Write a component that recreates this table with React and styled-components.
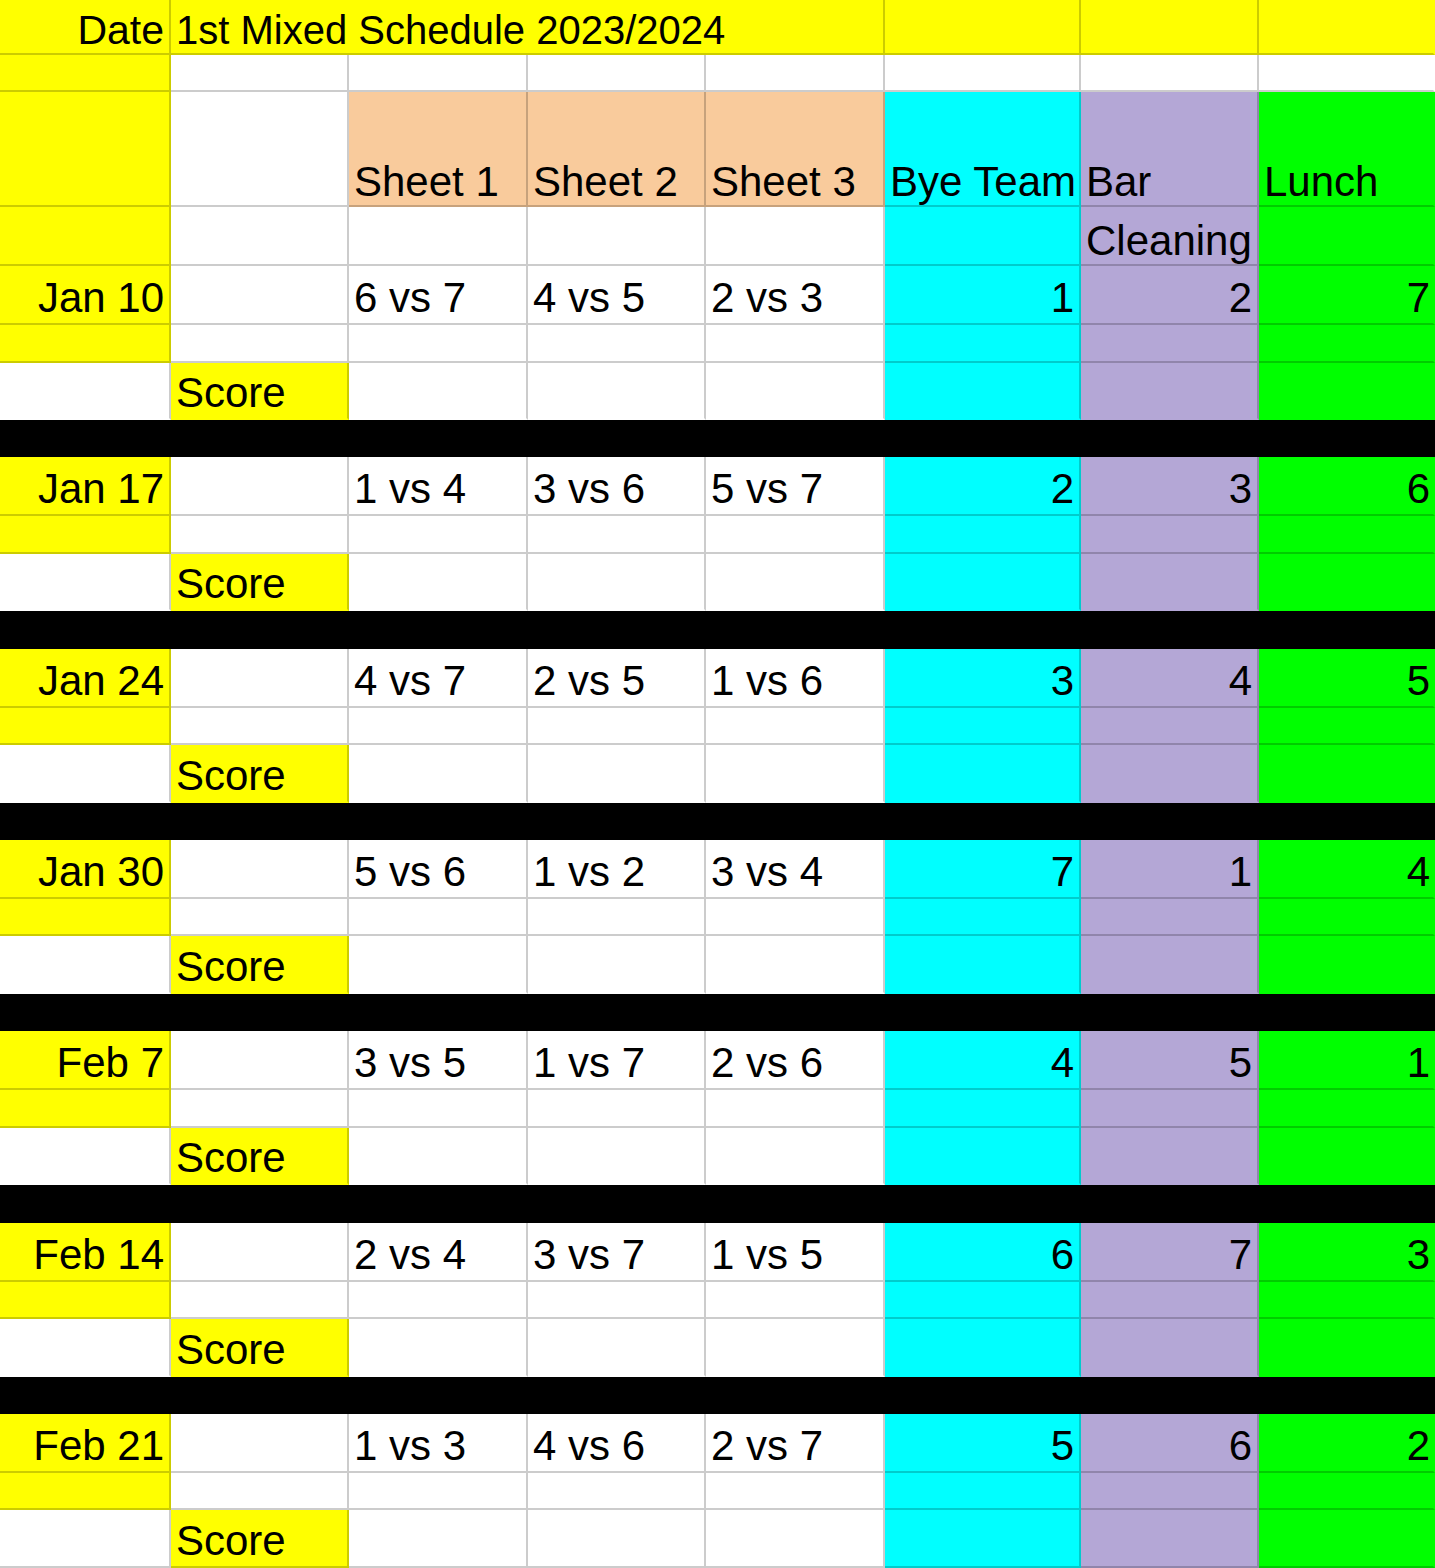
import React from "react";
import styled, { createGlobalStyle } from "styled-components";

const Global = createGlobalStyle`
  html, body { margin: 0; padding: 0; background: #ffffff; }
  body { font-family: "Liberation Sans", Arial, sans-serif; }
`;

const COLORS = {
  white: "#ffffff",
  yellow: "#ffff00",
  peach: "#f9cb9c",
  cyan: "#00ffff",
  purple: "#b4a7d6",
  green: "#00ff00",
  black: "#000000",
};

const Sheet = styled.div`
  width: 1435px;
  height: 1568px;
  overflow: hidden;
  display: flex;
  flex-direction: column;
  background: #ffffff;
`;

const Row = styled.div`
  display: grid;
  grid-template-columns: 171px 178px 179px 178px 179px 196px 178px 176px;
  height: ${(p) => p.$h}px;
  flex: none;
`;

const Divider = styled.div`
  height: ${(p) => p.$h}px;
  flex: none;
  background: #000000;
`;

const Cell = styled.div`
  box-sizing: border-box;
  min-width: 0;
  grid-column: ${(p) => (p.$span ? `span ${p.$span}` : "auto")};
  background: ${(p) => COLORS[p.$bg || "white"]};
  border-right: 2px solid ${(p) => (p.$noRight ? "transparent" : "rgba(0, 0, 0, 0.2)")};
  border-bottom: 2px solid ${(p) => (p.$noBottom ? "transparent" : "rgba(0, 0, 0, 0.2)")};
  display: flex;
  align-items: flex-end;
  justify-content: ${(p) => (p.$right ? "flex-end" : "flex-start")};
  padding: 0 ${(p) => (p.$noRight ? 3 : 5)}px ${(p) => p.$pb ?? 5}px 5px;
  font-size: ${(p) => p.$fs ?? 42}px;
  line-height: 41px;
  color: #000000;
  white-space: nowrap;
  overflow: visible;
`;

const COL_BG = ["yellow", "white", "white", "white", "white", "cyan", "purple", "green"];

const schedule = [
  { date: "Jan 10", games: ["6 vs 7", "4 vs 5", "2 vs 3"], bye: 1, bar: 2, lunch: 7 },
  { date: "Jan 17", games: ["1 vs 4", "3 vs 6", "5 vs 7"], bye: 2, bar: 3, lunch: 6 },
  { date: "Jan 24", games: ["4 vs 7", "2 vs 5", "1 vs 6"], bye: 3, bar: 4, lunch: 5 },
  { date: "Jan 30", games: ["5 vs 6", "1 vs 2", "3 vs 4"], bye: 7, bar: 1, lunch: 4 },
  { date: "Feb 7", games: ["3 vs 5", "1 vs 7", "2 vs 6"], bye: 4, bar: 5, lunch: 1 },
  { date: "Feb 14", games: ["2 vs 4", "3 vs 7", "1 vs 5"], bye: 6, bar: 7, lunch: 3 },
  { date: "Feb 21", games: ["1 vs 3", "4 vs 6", "2 vs 7"], bye: 5, bar: 6, lunch: 2 },
];

function Week({ week, last }) {
  return (
    <>
      <Row $h={59}>
        <Cell $bg="yellow" $right>{week.date}</Cell>
        <Cell />
        {week.games.map((g) => (
          <Cell key={g}>{g}</Cell>
        ))}
        <Cell $bg="cyan" $right>{week.bye}</Cell>
        <Cell $bg="purple" $right>{week.bar}</Cell>
        <Cell $bg="green" $right $noRight>{week.lunch}</Cell>
      </Row>
      <Row $h={37.5}>
        {COL_BG.map((bg, i) => (
          <Cell key={i} $bg={bg} $noRight={i === 7} />
        ))}
      </Row>
      <Row $h={57.5}>
        <Cell $noBottom={!last} />
        <Cell $bg="yellow" $noBottom={!last}>Score</Cell>
        <Cell $noBottom={!last} />
        <Cell $noBottom={!last} />
        <Cell $noBottom={!last} />
        <Cell $bg="cyan" $noBottom={!last} />
        <Cell $bg="purple" $noBottom={!last} />
        <Cell $bg="green" $noBottom={!last} $noRight />
      </Row>
    </>
  );
}

export default function App() {
  return (
    <>
      <Global />
      <Sheet>
        <Row $h={55}>
          <Cell $bg="yellow" $right $fs={41} $pb={2}>Date</Cell>
          <Cell $bg="yellow" $span={4} $fs={40} $pb={2}>1st Mixed Schedule 2023/2024</Cell>
          <Cell $bg="yellow" />
          <Cell $bg="yellow" />
          <Cell $bg="yellow" $noRight />
        </Row>
        <Row $h={37}>
          <Cell $bg="yellow" />
          <Cell />
          <Cell />
          <Cell />
          <Cell />
          <Cell />
          <Cell />
          <Cell $noRight />
        </Row>
        <Row $h={115}>
          <Cell $bg="yellow" />
          <Cell />
          <Cell $bg="peach" $pb={3}>Sheet 1</Cell>
          <Cell $bg="peach" $pb={3}>Sheet 2</Cell>
          <Cell $bg="peach" $pb={3}>Sheet 3</Cell>
          <Cell $bg="cyan" $pb={3}>Bye Team</Cell>
          <Cell $bg="purple" $pb={3}>Bar</Cell>
          <Cell $bg="green" $pb={3} $noRight>Lunch</Cell>
        </Row>
        <Row $h={59}>
          <Cell $bg="yellow" />
          <Cell />
          <Cell />
          <Cell />
          <Cell />
          <Cell $bg="cyan" />
          <Cell $bg="purple" $pb={3}>Cleaning</Cell>
          <Cell $bg="green" $noRight />
        </Row>
        {schedule.map((w, i) => (
          <React.Fragment key={w.date}>
            <Week week={w} last={i === schedule.length - 1} />
            {i < schedule.length - 1 && <Divider $h={37.33} />}
          </React.Fragment>
        ))}
      </Sheet>
    </>
  );
}
